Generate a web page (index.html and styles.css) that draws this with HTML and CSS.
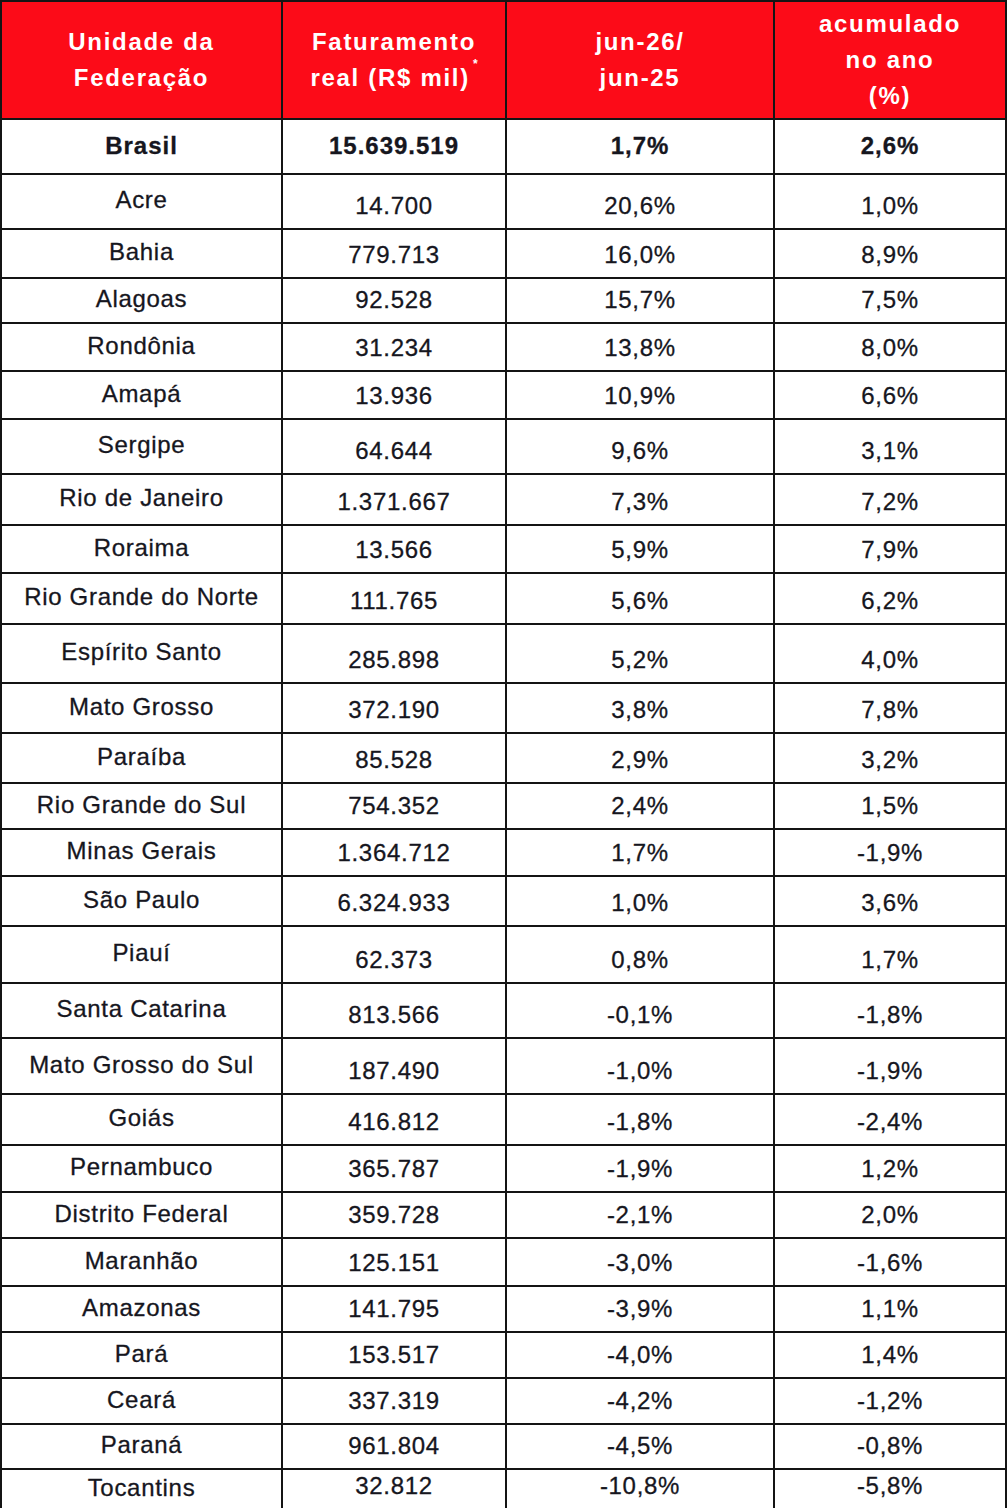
FILE: index.html
```html
<!DOCTYPE html>
<html lang="pt-BR">
<head>
<meta charset="utf-8">
<title>Faturamento real por Unidade da Federação</title>
<link rel="stylesheet" href="styles.css">
</head>
<body>
<table class="uf-table">
  <colgroup>
    <col class="c1"><col class="c2"><col class="c3"><col class="c4">
  </colgroup>
  <thead>
    <tr class="head">
      <th>Unidade da<br>Federação</th>
      <th>Faturamento<br>real (R$ mil)<sup class="star">*</sup></th>
      <th>jun-26/<br>jun-25</th>
      <th>acumulado<br>no ano<br>(%)</th>
    </tr>
  </thead>
  <tbody>
    <tr class="total r53"><td>Brasil</td><td>15.639.519</td><td>1,7%</td><td>2,6%</td></tr>
    <tr class="r53"><td>Acre</td><td>14.700</td><td>20,6%</td><td>1,0%</td></tr>
    <tr class="r47"><td>Bahia</td><td>779.713</td><td>16,0%</td><td>8,9%</td></tr>
    <tr class="r43"><td>Alagoas</td><td>92.528</td><td>15,7%</td><td>7,5%</td></tr>
    <tr class="r46"><td>Rondônia</td><td>31.234</td><td>13,8%</td><td>8,0%</td></tr>
    <tr class="r46"><td>Amapá</td><td>13.936</td><td>10,9%</td><td>6,6%</td></tr>
    <tr class="r53"><td>Sergipe</td><td>64.644</td><td>9,6%</td><td>3,1%</td></tr>
    <tr class="r49"><td>Rio de Janeiro</td><td>1.371.667</td><td>7,3%</td><td>7,2%</td></tr>
    <tr class="r46"><td>Roraima</td><td>13.566</td><td>5,9%</td><td>7,9%</td></tr>
    <tr class="r49"><td>Rio Grande do Norte</td><td>111.765</td><td>5,6%</td><td>6,2%</td></tr>
    <tr class="r57"><td>Espírito Santo</td><td>285.898</td><td>5,2%</td><td>4,0%</td></tr>
    <tr class="r48"><td>Mato Grosso</td><td>372.190</td><td>3,8%</td><td>7,8%</td></tr>
    <tr class="r48"><td>Paraíba</td><td>85.528</td><td>2,9%</td><td>3,2%</td></tr>
    <tr class="r44"><td>Rio Grande do Sul</td><td>754.352</td><td>2,4%</td><td>1,5%</td></tr>
    <tr class="r45"><td>Minas Gerais</td><td>1.364.712</td><td>1,7%</td><td>-1,9%</td></tr>
    <tr class="r48"><td>São Paulo</td><td>6.324.933</td><td>1,0%</td><td>3,6%</td></tr>
    <tr class="r55"><td>Piauí</td><td>62.373</td><td>0,8%</td><td>1,7%</td></tr>
    <tr class="r53"><td>Santa Catarina</td><td>813.566</td><td>-0,1%</td><td>-1,8%</td></tr>
    <tr class="r54"><td>Mato Grosso do Sul</td><td>187.490</td><td>-1,0%</td><td>-1,9%</td></tr>
    <tr class="r49"><td>Goiás</td><td>416.812</td><td>-1,8%</td><td>-2,4%</td></tr>
    <tr class="r45"><td>Pernambuco</td><td>365.787</td><td>-1,9%</td><td>1,2%</td></tr>
    <tr class="r44"><td>Distrito Federal</td><td>359.728</td><td>-2,1%</td><td>2,0%</td></tr>
    <tr class="r46"><td>Maranhão</td><td>125.151</td><td>-3,0%</td><td>-1,6%</td></tr>
    <tr class="r44"><td>Amazonas</td><td>141.795</td><td>-3,9%</td><td>1,1%</td></tr>
    <tr class="r44"><td>Pará</td><td>153.517</td><td>-4,0%</td><td>1,4%</td></tr>
    <tr class="r44"><td>Ceará</td><td>337.319</td><td>-4,2%</td><td>-1,2%</td></tr>
    <tr class="r43"><td>Paraná</td><td>961.804</td><td>-4,5%</td><td>-0,8%</td></tr>
    <tr class="r38"><td>Tocantins</td><td>32.812</td><td>-10,8%</td><td>-5,8%</td></tr>
  </tbody>
</table>
</body>
</html>
```
FILE: styles.css
```css
html, body {
  margin: 0;
  padding: 0;
  background: #ffffff;
}

.uf-table {
  table-layout: fixed;
  width: 1007px;
  border-collapse: separate;
  border-spacing: 2px;
  background: #141414;
  font-family: "Liberation Sans", Arial, sans-serif;
  color: #16161e;
}

.c1 { width: 279px; }
.c2 { width: 222px; }
.c3 { width: 266px; }
.c4 { width: 230px; }

.head { height: 116px; }

.head th {
  background: #fc0b18;
  color: #ffffff;
  font-weight: bold;
  font-size: 24px;
  line-height: 36px;
  letter-spacing: 1.7px;
  text-align: center;
  vertical-align: middle;
  padding: 0;
}

.star {
  font-size: 12px;
  line-height: 0;
  letter-spacing: 0;
  vertical-align: top;
  position: relative;
  top: 4px;
  margin-left: 3px;
}

tbody td {
  background: #ffffff;
  font-size: 24px;
  line-height: 28px;
  letter-spacing: 0.7px;
  text-align: center;
  vertical-align: bottom;
  padding: 0 0 8px 0;
  white-space: nowrap;
  -webkit-text-stroke: 0.3px #16161e;
}

tbody td:first-child {
  vertical-align: middle;
  padding: 0 0 3px 0;
}

.total td,
.total td:first-child {
  font-weight: bold;
  letter-spacing: 1px;
  vertical-align: middle;
  padding: 0 0 1px 0;
}

.r38 { height: 38px; }
.r43 { height: 43px; }
.r44 { height: 44px; }
.r45 { height: 45px; }
.r46 { height: 46px; }
.r47 { height: 47px; }
.r48 { height: 48px; }
.r49 { height: 49px; }
.r53 { height: 53px; }
.r54 { height: 54px; }
.r55 { height: 55px; }
.r57 { height: 57px; }
```
